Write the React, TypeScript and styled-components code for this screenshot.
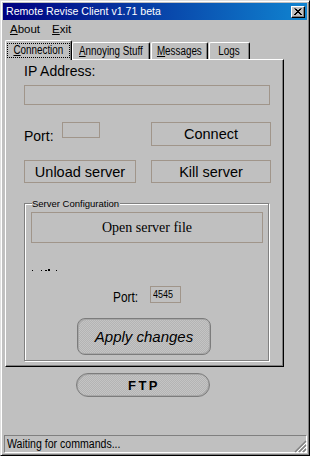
import React from "react";
import styled, { createGlobalStyle } from "styled-components";

const GlobalStyle = createGlobalStyle`
  html, body {
    margin: 0;
    padding: 0;
    background: #c0c0c0;
  }
  * {
    box-sizing: border-box;
  }
`;

const sans = `"Liberation Sans", Arial, sans-serif`;
const tan = "#a0958a";

// no narrow face installed, so squeeze the regular one
const Narrow = styled.span<{ $origin?: string; $scale?: number }>`
  display: inline-block;
  white-space: nowrap;
  transform: scaleX(${(p) => p.$scale ?? 0.82});
  transform-origin: ${(p) => p.$origin ?? "center"};
`;

const Window = styled.div`
  width: 310px;
  height: 456px;
  display: flex;
  flex-direction: column;
  background: #c0c0c0;
  border: 1px solid;
  border-color: #dfdfdf #000 #000 #dfdfdf;
  box-shadow: inset 1px 1px #fff, inset -1px -1px #808080;
  padding: 2px;
  font-family: ${sans};
  color: #000;
`;

const TitleBar = styled.div`
  height: 17px;
  display: flex;
  align-items: center;
  justify-content: space-between;
  padding: 0 2px 0 3px;
  background: linear-gradient(to right, #000080, #1084d0);
`;

const Title = styled.span`
  color: #fff;
  font-size: 10.6px;
  line-height: 13px;
`;

const CloseButton = styled.button`
  width: 14px;
  height: 12px;
  padding: 0;
  display: flex;
  align-items: center;
  justify-content: center;
  background: #c0c0c0;
  border: 1px solid;
  border-color: #fff #000 #000 #fff;
  box-shadow: inset -1px -1px #808080;
`;

const MenuBar = styled.div`
  height: 18px;
  display: flex;
  align-items: center;
  gap: 12px;
  padding-left: 7px;
`;

const MenuItem = styled.span`
  font-size: 11.5px;
  line-height: 14px;
  u {
    text-decoration: underline;
    text-underline-offset: 1px;
  }
`;

const Body = styled.div`
  display: flex;
  flex-direction: column;
  padding-left: 2px;
  flex: 1;
`;

const TabStrip = styled.div`
  height: 19px;
  margin-top: 2px;
  display: flex;
  align-items: flex-end;
  position: relative;
  z-index: 1;
`;

const Tab = styled.div<{ $w: number; $gap?: number; $active?: boolean }>`
  width: ${(p) => p.$w}px;
  margin-left: ${(p) => p.$gap ?? 0}px;
  height: ${(p) => (p.$active ? 20 : 17)}px;
  margin-bottom: ${(p) => (p.$active ? -1 : 0)}px;
  background: #c0c0c0;
  border-top: 1px solid #fff;
  border-left: 1px solid #fff;
  border-right: 1px solid #000;
  border-radius: 2px 2px 0 0;
  box-shadow: inset -1px 0 #808080;
  display: flex;
  align-items: ${(p) => (p.$active ? "flex-start" : "center")};
  justify-content: center;
  padding: ${(p) => (p.$active ? "2px 2px 0 2px" : "0 1px 0 0")};
  font-size: 12px;
  line-height: 13px;
  white-space: nowrap;
`;

const FocusRing = styled.span`
  flex: 1;
  height: 15px;
  display: flex;
  align-items: center;
  justify-content: center;
  border: 1px dotted #000;
`;

const Panel = styled.div`
  width: 279px;
  height: 308px;
  display: flex;
  flex-direction: column;
  border-top: 1px solid #fff;
  border-left: 1px solid #fff;
  border-right: 1px solid #000;
  border-bottom: 1px solid #000;
  box-shadow: inset -1px -1px #808080;
  padding: 3px 12px 0 18px;
`;

const Label = styled.div`
  font-size: 14px;
  line-height: 16px;
  white-space: nowrap;
`;

const Field = styled.div<{ $w: number; $h: number }>`
  width: ${(p) => p.$w}px;
  height: ${(p) => p.$h}px;
  border: 1px solid ${tan};
  background: #c0c0c0;
  font-size: 11px;
  line-height: 15px;
  padding-left: 2px;
`;

const Row = styled.div<{ $top: number }>`
  display: flex;
  align-items: flex-start;
  margin-top: ${(p) => p.$top}px;
`;

const FlatButton = styled.button<{ $w: number; $h: number; $serif?: boolean }>`
  width: ${(p) => p.$w}px;
  height: ${(p) => p.$h}px;
  padding: 0;
  border: 1px solid ${tan};
  background: #c0c0c0;
  font-family: ${(p) => (p.$serif ? `"Liberation Serif", "Times New Roman", serif` : sans)};
  font-size: ${(p) => (p.$serif ? 14 : 14.5)}px;
  color: #000;
`;

const Group = styled.fieldset`
  width: 245px;
  margin: 15px 0 0 0;
  padding: 0 0 5px 0;
  border: 1px solid #808080;
  box-shadow: 1px 1px 0 #fff, inset 1px 1px 0 #fff;
  min-width: 0;
`;

const Legend = styled.legend`
  margin-left: 7px;
  padding: 0 1px 0 0;
  background: #c0c0c0;
  font-size: 9.5px;
  line-height: 11px;
`;

const GroupInner = styled.div`
  display: flex;
  flex-direction: column;
  padding-left: 6px;
`;

const Marks = styled.div`
  display: flex;
  align-items: flex-end;
  height: 2px;
  margin: 26px 0 0 1px;
`;

const Mark = styled.span<{ $w: number; $h?: number; $gap: number }>`
  width: ${(p) => p.$w}px;
  height: ${(p) => p.$h ?? 1}px;
  margin-left: ${(p) => p.$gap}px;
  background: #000;
`;

const RoundButton = styled.button<{ $w: number; $h: number; $r: number }>`
  width: ${(p) => p.$w}px;
  height: ${(p) => p.$h}px;
  padding: 0;
  border-radius: ${(p) => p.$r}px;
  border: 1px solid #7c7c7c;
  box-shadow: inset 1px 1px #a8a8a8, inset -1px -1px #a8a8a8;
  background: repeating-conic-gradient(#c4c4c4 0 25%, #b4b4b4 0 50%) 0 0 / 2px 2px;
  color: #000;
  font-family: ${sans};
`;

const ApplyButton = styled(RoundButton)`
  font-size: 15px;
  font-style: italic;
`;

const FtpButton = styled(RoundButton)`
  margin: 6px 0 0 71px;
  font-size: 13px;
  font-weight: 700;
  letter-spacing: 2.5px;
  padding-left: 2px;
`;

const StatusBar = styled.div`
  margin: auto 0 0 1px;
  width: 303px;
  height: 18px;
  border: 1px solid;
  border-color: #808080 #fff #fff #808080;
  padding-left: 2px;
  display: flex;
  align-items: center;
  position: relative;
  font-size: 12px;
`;

const Grip = styled.svg`
  position: absolute;
  right: -1px;
  bottom: -1px;
`;

const U = ({ children }: { children: React.ReactNode }) => <u>{children}</u>;

export default function App() {
  return (
    <>
      <GlobalStyle />
      <Window>
        <TitleBar>
          <Title>Remote Revise Client v1.71 beta</Title>
          <CloseButton>
            <svg width="8" height="7" viewBox="0 0 8 7">
              <path d="M0.5 0.5 L7 7 M1.5 0.5 L8 7 M7.5 0.5 L1 7 M6.5 0.5 L0 7" stroke="#000" strokeWidth="1" fill="none" />
            </svg>
          </CloseButton>
        </TitleBar>
        <MenuBar>
          <MenuItem>
            <U>A</U>bout
          </MenuItem>
          <MenuItem>
            <U>E</U>xit
          </MenuItem>
        </MenuBar>
        <Body>
          <TabStrip>
            <Tab $w={67} $active>
              <FocusRing>
                <Narrow>
                  <U>C</U>onnection
                </Narrow>
              </FocusRing>
            </Tab>
            <Tab $w={78}>
              <Narrow>
                <U>A</U>nnoying Stuff
              </Narrow>
            </Tab>
            <Tab $w={57} $gap={1}>
              <Narrow>
                <U>M</U>essages
              </Narrow>
            </Tab>
            <Tab $w={41} $gap={1}>
              <Narrow>Logs</Narrow>
            </Tab>
          </TabStrip>
          <Panel>
            <Label>IP Address:</Label>
            <Field $w={246} $h={20} style={{ marginTop: 6 }} />
            <Row $top={17}>
              <Label style={{ marginTop: 6 }}>Port:</Label>
              <Field $w={38} $h={16} style={{ marginLeft: 8 }} />
              <FlatButton $w={120} $h={24} style={{ marginLeft: "auto" }}>
                Connect
              </FlatButton>
            </Row>
            <Row $top={14}>
              <FlatButton $w={112} $h={23}>Unload server</FlatButton>
              <FlatButton $w={120} $h={23} style={{ marginLeft: "auto" }}>
                Kill server
              </FlatButton>
            </Row>
            <Group>
              <Legend>Server Configuration</Legend>
              <GroupInner>
                <FlatButton $w={232} $h={31} $serif style={{ marginTop: 3 }}>
                  Open server file
                </FlatButton>
                <Marks>
                  <Mark $w={1} $gap={0} />
                  <Mark $w={1} $gap={8} />
                  <Mark $w={2} $gap={3} />
                  <Mark $w={2} $h={2} $gap={1} />
                  <Mark $w={1} $gap={6} />
                </Marks>
                <Row $top={15}>
                  <Label style={{ marginLeft: 82, marginTop: 3, width: 24 }}>
                    <Narrow $origin="left" $scale={0.85}>Port:</Narrow>
                  </Label>
                  <Field $w={31} $h={17} style={{ marginLeft: 13 }}>
                    <Narrow $origin="left">4545</Narrow>
                  </Field>
                </Row>
                <ApplyButton $w={134} $h={37} $r={8} style={{ marginTop: 13, marginLeft: 46 }}>
                  Apply changes
                </ApplyButton>
              </GroupInner>
            </Group>
          </Panel>
          <FtpButton $w={134} $h={24} $r={12}>
            FTP
          </FtpButton>
        </Body>
        <StatusBar>
          <Narrow $origin="left" $scale={0.88}>Waiting for commands...</Narrow>
          <Grip width="13" height="13" viewBox="0 0 13 13">
            <path d="M12 1 L1 12 M12 5 L5 12 M12 9 L9 12" stroke="#808080" strokeWidth="1.4" />
            <path d="M12 3 L3 12 M12 7 L7 12 M12 11 L11 12" stroke="#fff" strokeWidth="1" />
          </Grip>
        </StatusBar>
      </Window>
    </>
  );
}
